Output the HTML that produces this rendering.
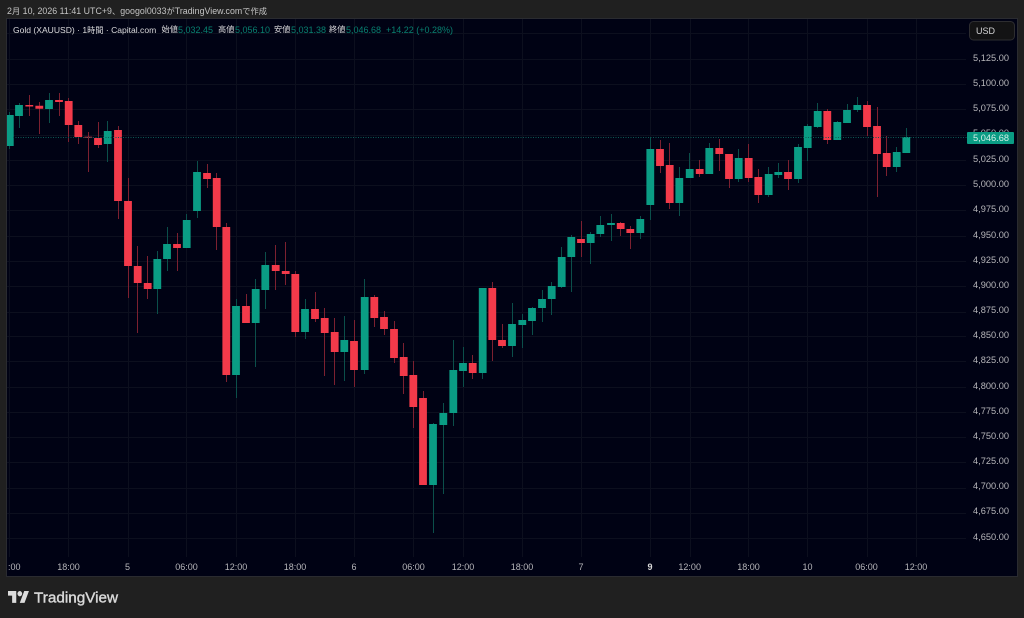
<!DOCTYPE html>
<html lang="ja"><head><meta charset="utf-8"><title>Gold (XAUUSD)</title>
<style>
html,body{margin:0;padding:0;background:#202020;width:1024px;height:618px;overflow:hidden}
#r{position:relative;width:1024px;height:618px;background:#202020;overflow:hidden;filter:blur(.3px);font-family:"Liberation Sans","Noto Sans CJK JP",sans-serif}
svg{position:absolute;left:0;top:0}
.t{position:absolute;white-space:nowrap;font-size:8.8px;line-height:12px;height:12px}
.p{left:973px;color:#b6b6ba;font-size:9.25px}
.x{top:561px;color:#b6b6ba;font-size:9px;transform:translateX(-50%)}
.l{top:24px;color:#dadadc}
.g{top:24px;color:#088070;font-size:9px}
.c{font-size:8.2px}
</style></head><body><div id="r">
<svg width="1024" height="618" viewBox="0 0 1024 618" fill="none">
<rect x="7" y="19" width="1010" height="557" fill="#000214"/>
<path stroke="#0c0f1e" stroke-width="1" d="M7 33.5H966M7 59.5H966M7 84.5H966M7 109.5H966M7 135.5H966M7 160.5H966M7 185.5H966M7 210.5H966M7 236.5H966M7 261.5H966M7 286.5H966M7 312.5H966M7 336.5H966M7 361.5H966M7 387.5H966M7 412.5H966M7 437.5H966M7 462.5H966M7 488.5H966M7 513.5H966M7 538.5H966"/>
<path stroke="#0c0f1e" stroke-width="1" d="M9.5 19V557M68.5 19V557M128.5 19V557M186.5 19V557M236.5 19V557M295.5 19V557M354.5 19V557M413.5 19V557M463.5 19V557M522.5 19V557M581.5 19V557M650.5 19V557M690.5 19V557M748.5 19V557M807.5 19V557M867.5 19V557M916.5 19V557"/>
<path stroke="#0b4f4a" stroke-width="1" d="M9.5 112V149M19.5 103V128M49.5 93V123M107.5 121V162M157.5 251V314M167.5 227V271M186.5 214V248M197.5 161V218M236.5 299V398M255.5 279V367M265.5 252V309M305.5 299V339M344.5 316V381M364.5 279V374M433.5 423V533M443.5 403V494M453.5 340V426M463.5 347V387M482.5 288V379M512.5 303V357M522.5 314V348M532.5 307V335M542.5 290V322M551.5 282V315M561.5 247V288M571.5 235V292M590.5 232V264M600.5 216V237M611.5 214V241M640.5 216V239M650.5 137V220M679.5 167V216M689.5 153V178M709.5 143V174M738.5 149V182M768.5 167V197M778.5 163V178M798.5 144V183M807.5 124V161M817.5 103V128M837.5 121V140M847.5 104V123M857.5 97V112M896.5 147V172M906.5 128V153"/>
<path stroke="#7c2030" stroke-width="1" d="M29.5 95V116M39.5 102V134M59.5 93V116M68.5 98V142M78.5 121V144M88.5 132V172M98.5 122V148M118.5 126V219M128.5 178V298M137.5 246V333M147.5 256V299M177.5 233V271M207.5 164V188M216.5 173V250M226.5 223V382M246.5 294V323M275.5 245V290M285.5 242V285M295.5 271V337M315.5 292V322M324.5 308V376M334.5 318V385M354.5 320V387M374.5 295V327M384.5 311V335M394.5 321V363M403.5 343V394M413.5 361V428M423.5 391V485M472.5 355V379M492.5 282V361M502.5 324V348M581.5 221V257M620.5 222V236M630.5 226V249M660.5 140V173M669.5 143V209M699.5 160V177M719.5 139V171M729.5 154V188M748.5 144V182M758.5 169V203M788.5 160V190M827.5 109V144M867.5 101V136M877.5 107V197M886.5 136V176"/>
<path stroke="#0a9c84" stroke-width="7.8" d="M9.8 115V146M19 105V116M49 100V109M107.7 131V144M157.3 259V289M167 244V259M186.7 220V248M197 172V211M236 306V375M255.7 289V323M265.3 265V290M305 309V332M344.3 340V352M364.7 297V370M433 424V485M443.3 413V425M453.3 370V413M463 363V371M482.7 288V373M512 324V346M522.3 320V325M532 308V321M542 299V308M551.7 286V299M561.7 257V287M571.3 237V257M590.7 234V243M600.3 225V234M611 223V225M640.3 219V233M650.3 149V205M679.3 178V203M689.7 169V178M709.3 148V174M738.7 158V179M768.7 174V195M778.3 172V175M798 147V179M807.7 126V148M817.7 111V127M837.3 122V140M847 110V123M857.3 105V110M896.7 152V167M906.3 137V153"/>
<path stroke="#f33a4a" stroke-width="7.8" d="M29.3 105V106.5M39.3 105.7V108.7M59 100V102M68.7 101V125M78.3 125V137M88.3 136.7V137.7M98 138V145M118 130V201M128 201V266M137.7 266V283M147.7 283V289M177 244V248M207 173V179M216.7 178V227M226.3 227V375M246 306V323M275.7 265V271M285.7 271V274M295.3 274V332M315 309V319M324.7 318V333M334.7 332V352M354 341V370M374.3 297V318M384 317V329M394 329V358M403.7 357V376M413.3 375V407M423 398V485M472.7 363V373M492.3 288V340M502 340V346M581 239V243M620.7 223V229M630.3 229V233M660 149V166M669.7 165V203M699.7 169V174M719.3 148V154M729 154V179M748.7 158V178M758.3 177V195M788 172V179M827.3 111V140M867 105V127M877 126V154M886.7 153V167"/>
<path stroke="#0d5a55" stroke-width="1" stroke-dasharray="1 1.5" d="M13 137.5H967"/>
<path fill="#202020" d="M0 0H7V618H0zM1017 0H1024V618H1017zM0 0H1024V19H0zM0 576H1024V618H0z"/>
<rect x="6.5" y="18.5" width="1011" height="558" stroke="#2a2b30" stroke-width="1"/>
<rect x="969.5" y="21.5" width="45" height="18.5" rx="4" fill="#131314" stroke="#2d2d30" stroke-width="1"/>
<g fill="#dcdcdc" transform="translate(8 588.4) scale(.59 .66)"><path d="M14 22H7V11H0V4h14v18zM28 22h-8l7.5-18h8L28 22z"/><circle cx="20" cy="8" r="4"/></g>
<text x="34" y="602.3" font-family="Liberation Sans, sans-serif" font-size="15" fill="#d8d8d8" stroke="#d8d8d8" stroke-width=".4" textLength="84" lengthAdjust="spacingAndGlyphs">TradingView</text>
</svg>
<div class="t" style="left:7px;top:5px;color:#c4c4c4;letter-spacing:.035px">2<span class="c">月</span> 10, 2026 11:41 UTC+9<span class="c">、</span>googol0033<span class="c">が</span>TradingView.com<span class="c">で作成</span></div>
<div class="t l" style="left:13px;font-size:8.55px">Gold (XAUUSD) · 1<span class="c">時間</span> · Capital.com</div>
<div class="t l c" style="left:161.5px">始値</div><div class="t g" style="left:178px">5,032.45</div>
<div class="t l c" style="left:218px">高値</div><div class="t g" style="left:235px">5,056.10</div>
<div class="t l c" style="left:274px">安値</div><div class="t g" style="left:291px">5,031.38</div>
<div class="t l c" style="left:329px">終値</div><div class="t g" style="left:346px">5,046.68</div>
<div class="t g" style="left:386px">+14.22 (+0.28%)</div>
<div class="t" style="left:976px;top:24.5px;color:#d4d4d6;font-size:9px">USD</div>
<div class="t p" style="top:51.5px">5,125.00</div>
<div class="t p" style="top:77px">5,100.00</div>
<div class="t p" style="top:102px">5,075.00</div>
<div class="t p" style="top:127px">5,050.00</div>
<div style="position:absolute;left:967px;top:132px;width:47px;height:12px;border-radius:1px;background:#0a9c84"></div>
<div class="t p" style="top:132px;color:#d4f0ea">5,046.68</div>
<div class="t p" style="top:152.5px">5,025.00</div>
<div class="t p" style="top:177.5px">5,000.00</div>
<div class="t p" style="top:203px">4,975.00</div>
<div class="t p" style="top:228.5px">4,950.00</div>
<div class="t p" style="top:253.5px">4,925.00</div>
<div class="t p" style="top:279px">4,900.00</div>
<div class="t p" style="top:304px">4,875.00</div>
<div class="t p" style="top:329px">4,850.00</div>
<div class="t p" style="top:354px">4,825.00</div>
<div class="t p" style="top:380px">4,800.00</div>
<div class="t p" style="top:405px">4,775.00</div>
<div class="t p" style="top:430px">4,750.00</div>
<div class="t p" style="top:455px">4,725.00</div>
<div class="t p" style="top:480px">4,700.00</div>
<div class="t p" style="top:505px">4,675.00</div>
<div class="t p" style="top:531px">4,650.00</div>
<div class="t x" style="left:8px;transform:none">:00</div>
<div class="t x" style="left:68.5px">18:00</div>
<div class="t x" style="left:127.5px">5</div>
<div class="t x" style="left:186.5px">06:00</div>
<div class="t x" style="left:236px">12:00</div>
<div class="t x" style="left:295px">18:00</div>
<div class="t x" style="left:354px">6</div>
<div class="t x" style="left:413.5px">06:00</div>
<div class="t x" style="left:463px">12:00</div>
<div class="t x" style="left:522px">18:00</div>
<div class="t x" style="left:581px">7</div>
<div class="t x" style="left:650px;color:#d8d8d8;font-weight:700">9</div>
<div class="t x" style="left:689.7px">12:00</div>
<div class="t x" style="left:748.5px">18:00</div>
<div class="t x" style="left:807.5px">10</div>
<div class="t x" style="left:866.5px">06:00</div>
<div class="t x" style="left:916px">12:00</div>
</div></body></html>
